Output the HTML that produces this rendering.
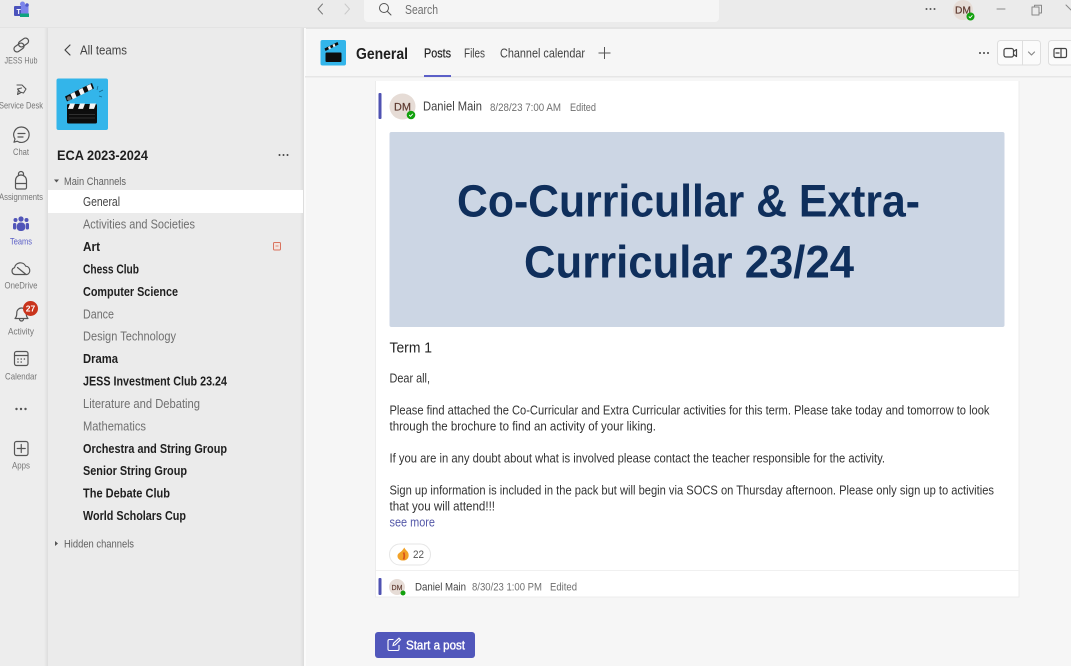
<!DOCTYPE html>
<html lang="en"><head><meta charset="utf-8"><title>Microsoft Teams - General</title>
<style>
html,body{margin:0;padding:0;width:1071px;height:666px;overflow:hidden;background:#f5f5f5}
svg{display:block;filter:blur(.35px)}
text{font-family:"Liberation Sans",sans-serif;font-size:13px;fill:#424242}
.b{font-weight:700;fill:#1f1f1f}
.g{fill:#707070}
.r{font-size:9.5px;fill:#777;text-anchor:middle}
.m{font-size:11px;fill:#616161}
.p{fill:#333}
.i{fill:none;stroke:#555;stroke-width:1.2;stroke-linecap:round;stroke-linejoin:round}
</style></head><body>
<svg width="1071" height="666" viewBox="0 0 1071 666" xmlns="http://www.w3.org/2000/svg">
<defs>
<linearGradient id="sl"><stop offset="0" stop-color="#000" stop-opacity="0"/><stop offset="1" stop-color="#000" stop-opacity=".07"/></linearGradient>
</defs>
<rect width="1071" height="666" fill="#f6f6f6"/>
<!-- top bar -->
<rect width="1071" height="28" fill="#ebebeb"/>
<rect y="27" width="1071" height="2" fill="#e3e3e3"/>
<rect x="364" y="-6" width="355" height="28" rx="4" fill="#f5f5f5"/>
<!-- left rail + panel -->
<rect y="28" width="48" height="638" fill="#ededed"/>
<rect x="44" y="28" width="4" height="638" fill="url(#sl)"/>
<rect x="48" y="28" width="256" height="638" fill="#ebebeb"/>
<rect x="300" y="28" width="4" height="638" fill="url(#sl)"/>
<rect x="304" y="28" width="2" height="638" fill="#fbfbfb"/>
<rect x="48" y="190" width="255" height="23" fill="#fff"/>
<!-- header line -->
<rect x="305" y="76" width="766" height="1.5" fill="#e6e6e6"/>

<!-- teams logo -->
<rect x="14" y="6" width="10" height="10" rx="1" fill="#4b53bc"/>
<rect x="21" y="5" width="7.500" height="11" rx="1" fill="#7b83eb"/>
<circle cx="22.500" cy="4" r="2.500" fill="#7b83eb"/><circle cx="27" cy="5" r="1.800" fill="#5059c9"/>
<rect x="20" y="13.500" width="9" height="3.500" fill="#10a37f"/>
<text x="16.500" y="14" style="font-size:7px;font-weight:700;fill:#fff">T</text>

<!-- rail icons -->
<g class="i">
<rect x="18" y="39.500" width="11" height="6" rx="3" transform="rotate(-35 23.500 42.500)"/>
<rect x="13.500" y="44.500" width="11" height="6" rx="3" transform="rotate(-35 19 47.500)"/>
<path d="M17 85h5l4 4-2.500 4-3.500-1-2.500-3 4-1M18.500 90l-1 4.500 3.500-2" stroke-width="1.100"/>
<path d="M21.500 127a7.700 7.700 0 1 1-4.200 14.200l-3.300 1 1-3.200a7.700 7.700 0 0 1 6.500-12zM18 133.500h7M18 137h5"/>
<path d="M15.500 180.500a5.500 5.500 0 0 1 11 0v7a1.500 1.500 0 0 1-1.500 1.500h-8a1.500 1.500 0 0 1-1.500-1.500zM15.500 183.500h11M18.500 175.500v-1.500a2.500 2.500 0 0 1 5 0v1.500"/>
<path d="M15 274.500a3.500 3.500 0 0 1-.5-6.800 6 6 0 0 1 11.300-1.500 4.300 4.300 0 0 1 1.200 8.300zM17.500 267.500l8.500 7"/>
<path d="M15 318.500c1.300-1.300 1.800-2.500 1.800-5.500a4.700 4.700 0 0 1 4.700-5c2.500 0 4.700 2 4.700 5 0 3 .5 4.200 1.800 5.500zM19.500 319a2 2 0 0 0 4 0"/>
<rect x="14.500" y="351.500" width="13.500" height="14" rx="2"/><path d="M14.500 355.500h13.500"/>
<rect x="14.500" y="441.500" width="13.500" height="14" rx="2"/><path d="M21.250 444.500v8M17.250 448.500h8"/>
</g>
<g fill="#555"><circle cx="18" cy="359" r=".8"/><circle cx="21.200" cy="359" r=".8"/><circle cx="24.400" cy="359" r=".8"/><circle cx="18" cy="362" r=".8"/><circle cx="21.200" cy="362" r=".8"/>
<circle cx="16.500" cy="409" r="1.200"/><circle cx="21" cy="409" r="1.200"/><circle cx="25.500" cy="409" r="1.200"/></g>
<!-- teams active -->
<g fill="#5155b8"><circle cx="21" cy="219" r="2.600"/><circle cx="15.500" cy="220" r="2"/><circle cx="26.500" cy="220" r="2"/><rect x="16.800" y="222.500" width="8.400" height="8.500" rx="3.500"/><rect x="13" y="223" width="3.300" height="6.500" rx="1.500"/><rect x="25.700" y="223" width="3.300" height="6.500" rx="1.500"/></g>
<!-- badge -->
<circle cx="30.500" cy="308.500" r="7.500" fill="#c9341c"/>
<text x="30.500" y="311.500" style="font-size:8.500px;font-weight:700;fill:#fff;text-anchor:middle">27</text>

<text class="r" x="21" y="63.500" textLength="33" lengthAdjust="spacingAndGlyphs">JESS Hub</text>
<text class="r" x="21" y="108.500" textLength="44" lengthAdjust="spacingAndGlyphs">Service Desk</text>
<text class="r" x="21" y="155" textLength="16" lengthAdjust="spacingAndGlyphs">Chat</text>
<text class="r" x="21" y="200" textLength="44" lengthAdjust="spacingAndGlyphs">Assignments</text>
<text class="r" x="21" y="244.500" textLength="22" lengthAdjust="spacingAndGlyphs" style="fill:#5b5fc7">Teams</text>
<text class="r" x="21" y="288.500" textLength="33" lengthAdjust="spacingAndGlyphs">OneDrive</text>
<text class="r" x="21" y="334.500" textLength="26" lengthAdjust="spacingAndGlyphs">Activity</text>
<text class="r" x="21" y="379.500" textLength="32" lengthAdjust="spacingAndGlyphs">Calendar</text>
<text class="r" x="21" y="468.500" textLength="18" lengthAdjust="spacingAndGlyphs">Apps</text>

<!-- top bar controls -->
<g class="i" style="stroke-width:1"><path d="M322.500 4l-4.500 5 4.500 5" style="stroke:#777"/><path d="M345 4l4.500 5-4.500 5" style="stroke:#c9c9c9"/>
<circle cx="384" cy="8" r="4.500"/><path d="M387.500 11.500l3.500 3.500"/>
<path d="M997 9h8M1032 7h7v8h-7zM1034.500 7v-1.800h7v7.800h-2" style="stroke:#888"/><path d="M1066 5l5 5" style="stroke:#888"/></g>
<text x="405" y="14" textLength="33" lengthAdjust="spacingAndGlyphs" class="g" style="font-size:12.500px">Search</text>
<g fill="#555"><circle cx="926.500" cy="9" r="1"/><circle cx="930.500" cy="9" r="1"/><circle cx="934.500" cy="9" r="1"/></g>
<circle cx="963" cy="10" r="10" fill="#e6dcd6"/>
<text x="955" y="13.500" textLength="16" lengthAdjust="spacingAndGlyphs" style="font-size:10.500px;fill:#5e3a30;stroke:#5e3a30;stroke-width:.2">DM</text>
<circle cx="970.500" cy="16.500" r="4" fill="#13a10e"/><path d="M968.800 16.500l1.300 1.300 2.300-2.500" fill="none" stroke="#fff" stroke-width=".9"/>

<!-- panel -->
<path class="i" d="M70 45l-5 5 5 5" style="stroke:#424242;stroke-width:1.200"/>
<text x="80" y="54.500" textLength="47" lengthAdjust="spacingAndGlyphs" style="font-size:13px">All teams</text>
<!-- team logo -->
<rect x="56.500" y="78.500" width="51.500" height="51.500" rx="2" fill="#33b5ea"/>
<rect x="67" y="104" width="30" height="19.500" rx="1.500" fill="#0d0d0d"/>
<path d="M70 103.500h5l-2 5.500h-5zM80 103.500h5l-2 5.500h-5zM90 103.500h6l-2 5.500h-5z" fill="#f4f4f4"/>
<path d="M69 109.500h28" stroke="#0d0d0d" stroke-width="1.200"/>
<path d="M69 114.500h26M69 118h26" stroke="#555" stroke-width=".6"/>
<path d="M65 96.500l27-13.500 2 5.500-27 13z" fill="#0d0d0d"/>
<path d="M70.500 94l4-2 2.200 5.300-4 2zM78.500 90l4-2 2.200 5.300-4 2zM86.500 86l4-2 2 5-4 2z" fill="#f4f4f4"/>
<circle cx="69" cy="98.500" r="2.200" fill="#666"/>
<path d="M98 86l-1 4M103 90l-4 2M102 97l-3-1" stroke="#16688d" stroke-width=".7"/>

<text x="57" y="160" class="b" textLength="91" lengthAdjust="spacingAndGlyphs" style="font-size:14px">ECA 2023-2024</text>
<g fill="#444"><circle cx="279.500" cy="155" r="1"/><circle cx="283.500" cy="155" r="1"/><circle cx="287.500" cy="155" r="1"/></g>
<path d="M54 179.500h5l-2.500 3z" fill="#555"/>
<text x="64" y="185" class="m" textLength="62" lengthAdjust="spacingAndGlyphs">Main Channels</text>

<g style="font-size:13px">
<text x="83" y="206" textLength="37" lengthAdjust="spacingAndGlyphs" style="font-size:13px">General</text>
<text x="83" y="228.500" class="g" textLength="112" lengthAdjust="spacingAndGlyphs">Activities and Societies</text>
<text x="83" y="251" class="b" textLength="17" lengthAdjust="spacingAndGlyphs">Art</text>
<text x="83" y="273.500" class="b" textLength="56" lengthAdjust="spacingAndGlyphs">Chess Club</text>
<text x="83" y="296" class="b" textLength="95" lengthAdjust="spacingAndGlyphs">Computer Science</text>
<text x="83" y="318.500" class="g" textLength="31" lengthAdjust="spacingAndGlyphs">Dance</text>
<text x="83" y="340.500" class="g" textLength="93" lengthAdjust="spacingAndGlyphs">Design Technology</text>
<text x="83" y="363" class="b" textLength="35" lengthAdjust="spacingAndGlyphs">Drama</text>
<text x="83" y="385.500" class="b" textLength="144" lengthAdjust="spacingAndGlyphs">JESS Investment Club 23.24</text>
<text x="83" y="408" class="g" textLength="117" lengthAdjust="spacingAndGlyphs">Literature and Debating</text>
<text x="83" y="430.500" class="g" textLength="63" lengthAdjust="spacingAndGlyphs">Mathematics</text>
<text x="83" y="453" class="b" textLength="144" lengthAdjust="spacingAndGlyphs">Orchestra and String Group</text>
<text x="83" y="475" class="b" textLength="104" lengthAdjust="spacingAndGlyphs">Senior String Group</text>
<text x="83" y="497.500" class="b" textLength="87" lengthAdjust="spacingAndGlyphs">The Debate Club</text>
<text x="83" y="520" class="b" textLength="103" lengthAdjust="spacingAndGlyphs">World Scholars Cup</text>
</g>
<rect x="273.500" y="242.500" width="7" height="7.500" rx="1" fill="#f3e4df" stroke="#d9735f" stroke-width="1"/><path d="M275.500 246h3" stroke="#d9735f" stroke-width=".8"/>
<path d="M55 541v5l3-2.500z" fill="#555"/>
<text x="64" y="547.500" class="m" textLength="70" lengthAdjust="spacingAndGlyphs">Hidden channels</text>

<!-- channel header -->
<rect x="320.500" y="40" width="25.500" height="25.500" rx="2" fill="#33b5ea"/>
<rect x="325.500" y="52.500" width="16" height="9.500" rx="1" fill="#0d0d0d"/>
<path d="M324.500 48.500l13-6.500 1 2.500-13 6.500z" fill="#0d0d0d"/>
<path d="M328 47l2-1 1 2.500-2 1zM332.500 44.800l2-1 1 2.500-2 1z" fill="#eee"/>
<text x="356" y="59" class="b" textLength="52" lengthAdjust="spacingAndGlyphs" style="font-size:16px">General</text>
<text x="424" y="57.500" textLength="27" lengthAdjust="spacingAndGlyphs" style="font-size:13px;fill:#242424;stroke:#242424;stroke-width:.2">Posts</text>
<rect x="424" y="75" width="27" height="2" fill="#5b5fc7"/>
<text x="464" y="57.500" textLength="21" lengthAdjust="spacingAndGlyphs" style="font-size:13px">Files</text>
<text x="500" y="57.500" textLength="85" lengthAdjust="spacingAndGlyphs" style="font-size:13px">Channel calendar</text>
<path d="M604.500 47v12M598.500 53h12" stroke="#555" stroke-width="1" fill="none"/>
<g fill="#444"><circle cx="980" cy="53" r="1"/><circle cx="984" cy="53" r="1"/><circle cx="988" cy="53" r="1"/></g>
<rect x="997.500" y="40.500" width="43" height="24.500" rx="3" fill="#fbfbfb" stroke="#dedede"/>
<path d="M1022.500 41v24" stroke="#dedede"/>
<rect x="1048.500" y="40.500" width="30" height="24.500" rx="3" fill="#fbfbfb" stroke="#dedede"/>
<g class="i" style="stroke:#444"><rect x="1004" y="48.500" width="9.500" height="8.500" rx="2"/><path d="M1013.500 51.500l3-2v7l-3-2"/><path d="M1028.500 52l3 3 3-3" style="stroke:#888"/>
<rect x="1054" y="48.500" width="12.500" height="9" rx="1.500"/><path d="M1061 48.500v9M1059 53h-3"/></g>

<!-- post card -->
<rect x="375" y="81" width="644.500" height="516" fill="#fff"/>
<rect x="375" y="81" width="1" height="516" fill="#ececec"/>
<rect x="1018.500" y="81" width="1" height="516" fill="#ececec"/>
<rect x="378.500" y="93" width="3" height="26" rx="1" fill="#4f52b2"/>
<circle cx="402.500" cy="106.500" r="13" fill="#e6dcd6"/>
<text x="394" y="110.500" textLength="17" lengthAdjust="spacingAndGlyphs" style="font-size:11px;fill:#5e3a30;stroke:#5e3a30;stroke-width:.2">DM</text>
<circle cx="411" cy="115" r="4.300" fill="#13a10e"/><path d="M409.200 115l1.300 1.300 2.300-2.500" fill="none" stroke="#fff" stroke-width=".9"/>
<text x="423" y="110.500" textLength="59" lengthAdjust="spacingAndGlyphs" style="font-size:12.500px">Daniel Main</text>
<text x="490" y="111" textLength="71" lengthAdjust="spacingAndGlyphs" class="g" style="font-size:11px">8/28/23 7:00 AM</text>
<text x="570" y="111" textLength="26" lengthAdjust="spacingAndGlyphs" class="g" style="font-size:11px">Edited</text>

<rect x="389.500" y="132" width="615" height="195" rx="2" fill="#ccd6e4"/>
<text x="457" y="216.500" textLength="463" lengthAdjust="spacingAndGlyphs" style="font-size:45px;font-weight:700;fill:#0f2f5c">Co-Curricullar &amp; Extra-</text>
<text x="524" y="277.500" textLength="330" lengthAdjust="spacingAndGlyphs" style="font-size:45px;font-weight:700;fill:#0f2f5c">Curricular 23/24</text>

<text x="389.500" y="352.500" textLength="42.500" lengthAdjust="spacingAndGlyphs" style="font-size:15px;fill:#242424">Term 1</text>
<g>
<text class="p" x="389.500" y="382.500" textLength="40.500" lengthAdjust="spacingAndGlyphs" style="font-size:12.500px">Dear all,</text>
<text class="p" x="389.500" y="414.500" textLength="600" lengthAdjust="spacingAndGlyphs" style="font-size:12.500px">Please find attached the Co-Curricular and Extra Curricular activities for this term. Please take today and tomorrow to look</text>
<text class="p" x="389.500" y="430.500" textLength="266.500" lengthAdjust="spacingAndGlyphs" style="font-size:12.500px">through the brochure to find an activity of your liking.</text>
<text class="p" x="389.500" y="462.500" textLength="495.500" lengthAdjust="spacingAndGlyphs" style="font-size:12.500px">If you are in any doubt about what is involved please contact the teacher responsible for the activity.</text>
<text class="p" x="389.500" y="494.500" textLength="604.500" lengthAdjust="spacingAndGlyphs" style="font-size:12.500px">Sign up information is included in the pack but will begin via SOCS on Thursday afternoon. Please only sign up to activities</text>
<text class="p" x="389.500" y="510.500" textLength="105.500" lengthAdjust="spacingAndGlyphs" style="font-size:12.500px">that you will attend!!!</text>
</g>
<text x="389.500" y="526.500" textLength="45.500" lengthAdjust="spacingAndGlyphs" style="font-size:12.500px;fill:#5458a8">see more</text>

<rect x="389.500" y="544" width="41" height="21" rx="10.500" fill="#fff" stroke="#e6e6e6"/>
<path d="M404.500 547.500c.3 2 2.500 3 3.500 5 1.300 2.500 1 7.500-4 8-4 .3-6.500-1.500-6.500-4.500 0-2.500 2.500-3.500 3.700-4.500 1.500-1.200 2-2.800 3.300-4z" fill="#f2a228"/>
<path d="M403.500 552.500c1 1.500 1 4.500 0 7" stroke="#d9531a" stroke-width="1.800" fill="none"/>
<text x="413" y="558" textLength="11" lengthAdjust="spacingAndGlyphs" style="font-size:11px;fill:#555">22</text>

<rect x="376" y="570" width="643" height="1" fill="#f0f0f0"/>
<rect x="378.500" y="578" width="3" height="17" rx="1" fill="#4f52b2"/>
<circle cx="397" cy="587" r="8" fill="#e6dcd6"/>
<text x="391.500" y="590" textLength="11" lengthAdjust="spacingAndGlyphs" style="font-size:7.500px;fill:#5e3a30;stroke:#5e3a30;stroke-width:.15">DM</text>
<circle cx="403" cy="593" r="2.500" fill="#13a10e"/>
<text x="415" y="590.500" textLength="51" lengthAdjust="spacingAndGlyphs" style="font-size:11px">Daniel Main</text>
<text x="472" y="590.500" textLength="70" lengthAdjust="spacingAndGlyphs" class="g" style="font-size:11px">8/30/23 1:00 PM</text>
<text x="550" y="590.500" textLength="27" lengthAdjust="spacingAndGlyphs" class="g" style="font-size:11px">Edited</text>
<rect x="375" y="596.500" width="644.500" height="1" fill="#ececec"/>

<!-- start a post -->
<rect x="375" y="632" width="100" height="26" rx="3" fill="#5157bb"/>
<path d="M393.500 639.500h-4a1.500 1.500 0 0 0-1.500 1.500v8a1.500 1.500 0 0 0 1.500 1.500h8a1.500 1.500 0 0 0 1.500-1.500v-4M393 645.500l.6-2.300 5.400-5 1.500 1.500-5.300 5.200z" fill="none" stroke="#fff" stroke-width="1.100"/>
<text x="406" y="649.500" textLength="59" lengthAdjust="spacingAndGlyphs" style="font-size:12.500px;fill:#fff;stroke:#fff;stroke-width:.35">Start a post</text>
</svg>
</body></html>
